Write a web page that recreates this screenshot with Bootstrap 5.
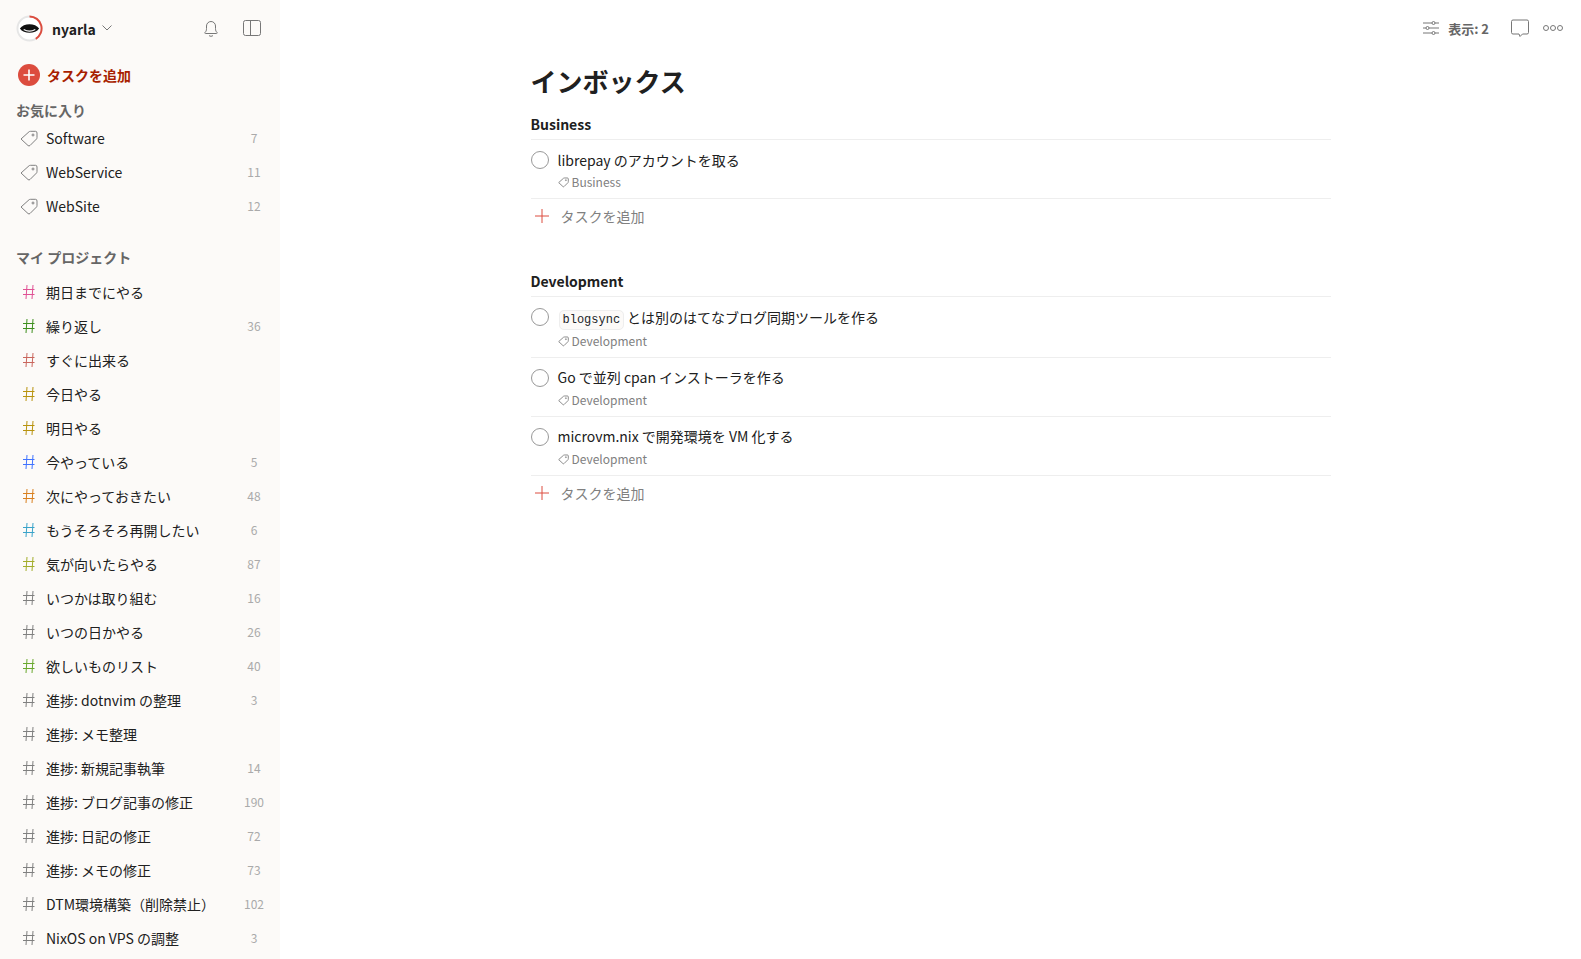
<!DOCTYPE html>
<html lang="ja">
<head>
    <title>インボックス</title>
    <meta charset="UTF-8">
    <meta name="viewport" content="width=device-width, initial-scale=1.0">
    <link href="https://cdn.jsdelivr.net/npm/bootstrap@5.3.0/dist/css/bootstrap.min.css" rel="stylesheet">
    <style>
        html, body { height: 100%; overflow: hidden; }
        body { font-family: "Noto Sans CJK JP", "Noto Sans", sans-serif; font-size: 14px; color: #202020; background: #fff; }
        .side { width: 280px; height: 959px; background: #fcfaf8; overflow: hidden; padding: 0 5px 0 16px; flex-shrink: 0; }
        .side-top { height: 56px; }
        .user-name { font-weight: 700; margin-left: 9px; line-height: 20px; padding-top: 2px; }
        .chevron-ico { margin-left: 6px; }
        .bell-ico { margin-right: 23px; }
        .panel-ico { margin-right: 14px; }
        .add-top { height: 36px; margin-top: 1px; color: #a81f00; font-weight: 700; }
        .add-top svg { margin-left: 1px; }
        .add-top span { margin-left: 6px; }
        .side-label { color: #666; font-weight: 700; line-height: 20px; }
        .fav-label { margin-top: 7px; height: 21px; }
        .proj-label { margin-top: 24px; height: 28px; }
        .side-row { height: 34px; padding-left: 4px; }
        .side-ico { width: 26px; flex-shrink: 0; }
        .hash { width: 26px; padding-left: 2px; flex-shrink: 0; font-size: 0; }
        .row-name { flex: 1; white-space: nowrap; color: #202020; }
        .row-count { width: 40px; text-align: center; font-size: 12px; color: #aaa; flex-shrink: 0; margin-right: 1px; }
        .main-top { height: 56px; color: #666; padding-right: 18px; }
        .view-text { font-weight: 700; font-size: 13px; margin: 2px 21px 0 9px; color: #666; }
        .more-ico { margin-left: 13px; }
        .inbox { width: 800px; margin: 0 auto; }
        .inbox h1 { font-size: 26px; font-weight: 700; line-height: 36px; margin: 7px 0 15px; }
        .sect-name { font-weight: 700; font-size: 14px; line-height: 20px; margin: 0; padding-bottom: 5px; border-bottom: 1px solid #eee; }
        .task { border-bottom: 1px solid #eee; padding: 9px 0 0; height: 59px; }
        .task-first { padding-top: 10px; }
        .task-code { height: 61px; }
        .circle { width: 18px; height: 18px; border: 1px solid #999; border-radius: 50%; flex-shrink: 0; margin-top: 2px; margin-right: 9px; }
        .task-first .circle { margin-top: 1px; }
        .task-name { line-height: 21px; }
        .task-tag { font-size: 12px; color: #808080; line-height: 18px; margin-top: 3px; }
        .task-first .task-tag { margin-top: 2px; }
        .task-code .task-tag { margin-top: 1px; }
        .task-tag svg { margin-right: 3px; }
        .inline-code { font-family: "Liberation Mono", monospace; font-size: 12px; background: #fcfaf8; border: 1px solid #eee; border-radius: 5px; padding: 2px 3px; margin-left: 1px; margin-right: 3px; }
        .add-task { height: 34px; color: #808080; }
        .add-task svg { margin-right: 12px; margin-left: 4px; }
        .sect-gap { height: 38px; }
    </style>
</head>
<body>
<div class="d-flex">
    <aside class="side">
        <div class="side-top d-flex align-items-center">
            <svg width="27" height="27" viewBox="0 0 28 28">
                <circle cx="14" cy="14" r="12.500" fill="#fff" stroke="#e6e6e6" stroke-width="2"/>
                <path d="M14 1.500A12.500 12.500 0 0 1 20.500 24.700" fill="none" stroke="#dc4c3e" stroke-width="2"/>
                <path d="M4 14C8 8 20 8 24 14C20 20 8 20 4 14Z" fill="#111"/>
                <path d="M8 15Q14 18.500 20 15" fill="none" stroke="#fff" stroke-width="1.100"/>
            </svg>
            <span class="user-name">nyarla</span>
            <svg class="chevron-ico" width="10" height="6" viewBox="0 0 10 6"><path d="M.5.500 5 5 9.500.500" fill="none" stroke="#777"/></svg>
            <svg class="ms-auto bell-ico" width="18" height="20" viewBox="0 0 18 20" fill="none" stroke="#777"><path d="M3 14.500c1-1 1.500-2 1.500-4V8a4.500 4.500 0 0 1 9 0v2.500c0 2 .5 3 1.500 4 .5.500.2 1-.5 1h-11c-.7 0-1-.5-.5-1ZM7 17.500c1 1 3 1 4 0"/></svg>
            <svg class="panel-ico" width="18" height="16" viewBox="0 0 18 16" fill="none" stroke="#777"><rect x=".5" y=".5" width="17" height="15" rx="2"/><path d="M7.500.500v15"/></svg>
        </div>
        <div class="add-top d-flex align-items-center">
            <svg width="24" height="24" viewBox="0 0 24 24"><circle cx="12" cy="12" r="11" fill="#dc4c3e"/><path d="M12 6.500v11M6.500 12h11" stroke="#fff" stroke-width="1.600"/></svg>
            <span>タスクを追加</span>
        </div>
        <div class="side-label fav-label">お気に入り</div>
        <ul class="list-unstyled m-0" id="favs"></ul>
        <div class="side-label proj-label">マイ プロジェクト</div>
        <ul class="list-unstyled m-0" id="projects"></ul>
    </aside>
    <main class="flex-grow-1">
        <div class="main-top d-flex align-items-center justify-content-end">
            <svg width="16" height="16" viewBox="0 0 16 16" fill="none" stroke="#777"><path d="M0 3h9M12 3h4M0 8h3M6 8h10M0 13h9M12 13h4"/><circle cx="10.500" cy="3" r="1.500"/><circle cx="4.500" cy="8" r="1.500"/><circle cx="10.500" cy="13" r="1.500"/></svg>
            <span class="view-text">表示: 2</span>
            <svg width="20" height="20" viewBox="0 0 20 20" fill="none" stroke="#777"><path d="M3 2h14a1.500 1.500 0 0 1 1.500 1.500v11a1.500 1.500 0 0 1-1.500 1.500h-4.500l-2.500 2.500-1-2.500H3a1.500 1.500 0 0 1-1.500-1.500v-11A1.500 1.500 0 0 1 3 2Z"/></svg>
            <svg class="more-ico" width="20" height="8" viewBox="0 0 20 8" fill="none" stroke="#777"><circle cx="3" cy="4" r="2.500"/><circle cx="10" cy="4" r="2.500"/><circle cx="17" cy="4" r="2.500"/></svg>
        </div>
        <div class="inbox">
            <h1>インボックス</h1>
            <section>
                <h2 class="sect-name">Business</h2>
                <div class="task task-first d-flex">
                    <div class="circle"></div>
                    <div>
                        <div class="task-name">librepay のアカウントを取る</div>
                        <div class="task-tag d-flex align-items-center"><svg width="11" height="12" viewBox="0 0 18 20" fill="none" stroke="#808080" stroke-width="1.500"><path d="M1 11 9 3.800Q9.500 3.300 10.500 3.300L15.500 3.300Q17 3.300 17 5L17 9.500Q17 10.500 16.500 11L10 17.500Q9 18.500 8 17.500Z"/><circle cx="13" cy="7" r=".8"/></svg>Business</div>
                    </div>
                </div>
                <div class="add-task d-flex align-items-center">
                    <svg width="14" height="14" viewBox="0 0 14 14"><path d="M7 0v14M0 7h14" stroke="#dc4c3e"/></svg>
                    <span>タスクを追加</span>
                </div>
            </section>
            <div class="sect-gap"></div>
            <section>
                <h2 class="sect-name">Development</h2>
                <div class="task task-first task-code d-flex">
                    <div class="circle"></div>
                    <div>
                        <div class="task-name"><code class="inline-code text-body">blogsync</code>とは別のはてなブログ同期ツールを作る</div>
                        <div class="task-tag d-flex align-items-center"><svg width="11" height="12" viewBox="0 0 18 20" fill="none" stroke="#808080" stroke-width="1.500"><path d="M1 11 9 3.800Q9.500 3.300 10.500 3.300L15.500 3.300Q17 3.300 17 5L17 9.500Q17 10.500 16.500 11L10 17.500Q9 18.500 8 17.500Z"/><circle cx="13" cy="7" r=".8"/></svg>Development</div>
                    </div>
                </div>
                <div class="task d-flex">
                    <div class="circle"></div>
                    <div>
                        <div class="task-name">Go で並列 cpan インストーラを作る</div>
                        <div class="task-tag d-flex align-items-center"><svg width="11" height="12" viewBox="0 0 18 20" fill="none" stroke="#808080" stroke-width="1.500"><path d="M1 11 9 3.800Q9.500 3.300 10.500 3.300L15.500 3.300Q17 3.300 17 5L17 9.500Q17 10.500 16.500 11L10 17.500Q9 18.500 8 17.500Z"/><circle cx="13" cy="7" r=".8"/></svg>Development</div>
                    </div>
                </div>
                <div class="task d-flex">
                    <div class="circle"></div>
                    <div>
                        <div class="task-name">microvm.nix で開発環境を VM 化する</div>
                        <div class="task-tag d-flex align-items-center"><svg width="11" height="12" viewBox="0 0 18 20" fill="none" stroke="#808080" stroke-width="1.500"><path d="M1 11 9 3.800Q9.500 3.300 10.500 3.300L15.500 3.300Q17 3.300 17 5L17 9.500Q17 10.500 16.500 11L10 17.500Q9 18.500 8 17.500Z"/><circle cx="13" cy="7" r=".8"/></svg>Development</div>
                    </div>
                </div>
                <div class="add-task d-flex align-items-center">
                    <svg width="14" height="14" viewBox="0 0 14 14"><path d="M7 0v14M0 7h14" stroke="#dc4c3e"/></svg>
                    <span>タスクを追加</span>
                </div>
            </section>
        </div>
    </main>
</div>
<script src="https://cdn.jsdelivr.net/npm/bootstrap@5.3.0/dist/js/bootstrap.bundle.min.js"></script>
<script>
    var favs = [["Software", 7], ["WebService", 11], ["WebSite", 12]];
    var projects = [
        ["期日までにやる", "", "#e05194"], ["繰り返し", 36, "#3f8f1f"], ["すぐに出来る", "", "#c9665d"],
        ["今日やる", "", "#b8930f"], ["明日やる", "", "#b8930f"], ["今やっている", 5, "#4073ff"],
        ["次にやっておきたい", 48, "#d98020"], ["もうそろそろ再開したい", 6, "#3aa3c9"], ["気が向いたらやる", 87, "#a3ad2c"],
        ["いつかは取り組む", 16, "#808080"], ["いつの日かやる", 26, "#808080"], ["欲しいものリスト", 40, "#6aa82f"],
        ["進捗: dotnvim の整理", 3, "#808080"], ["進捗: メモ整理", "", "#808080"], ["進捗: 新規記事執筆", 14, "#808080"],
        ["進捗: ブログ記事の修正", 190, "#808080"], ["進捗: 日記の修正", 72, "#808080"], ["進捗: メモの修正", 73, "#808080"],
        ["DTM環境構築（削除禁止）", 102, "#808080"], ["NixOS on VPS の調整", 3, "#808080"]
    ];
    var tagIcon = '<svg width="18" height="20" viewBox="0 0 18 20" fill="none" stroke="#808080"><path d="M1 11 9 3.800Q9.500 3.300 10.500 3.300L15.500 3.300Q17 3.300 17 5L17 9.500Q17 10.500 16.500 11L10 17.500Q9 18.500 8 17.500Z"/><circle cx="13" cy="7" r="1"/></svg>';
    function hashIcon(color) {
        return '<svg width="14" height="14" viewBox="0 0 14 14" fill="none" stroke="' + color + '"><path d="M5 0 4 14M11 0 10 14M1 4.500h11.500M1 9.500h11.500"/></svg>';
    }
    function rowHtml(icon, name, count) {
        return '<li class="side-row d-flex align-items-center">' + icon +
            '<span class="row-name">' + name + '</span><span class="row-count">' + count + '</span></li>';
    }
    var html = "";
    for (var i = 0; i < favs.length; i++) {
        html += rowHtml('<span class="side-ico d-flex">' + tagIcon + '</span>', favs[i][0], favs[i][1]);
    }
    document.getElementById("favs").innerHTML = html;
    html = "";
    for (var j = 0; j < projects.length; j++) {
        html += rowHtml('<span class="hash">' + hashIcon(projects[j][2]) + '</span>', projects[j][0], projects[j][1]);
    }
    document.getElementById("projects").innerHTML = html;
</script>
</body>
</html>
